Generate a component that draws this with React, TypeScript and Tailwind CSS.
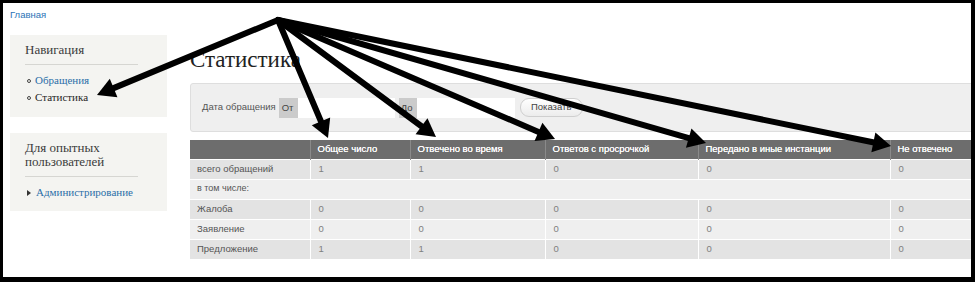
import React from 'react';

const serif = { fontFamily: '"Liberation Serif", "DejaVu Serif", serif' };

const columns = ['Общее число', 'Отвечено во время', 'Ответов с просрочкой', 'Передано в иные инстанции', 'Не отвечено'];
const widths = ['w-[120px]', 'w-[100px]', 'w-[135px]', 'w-[153px]', 'w-[192px]', 'w-[120px]'];

const rows: { label: string; values?: string[] }[] = [
  { label: 'всего обращений', values: ['1', '1', '0', '0', '0'] },
  { label: 'в том числе:' },
  { label: 'Жалоба', values: ['0', '0', '0', '0', '0'] },
  { label: 'Заявление', values: ['0', '0', '0', '0', '0'] },
  { label: 'Предложение', values: ['1', '1', '0', '0', '0'] },
];

// hand drawn annotation arrows, all from one point
const origin = { x: 278, y: 20 };
const tips = [
  { x: 97, y: 95 },
  { x: 328, y: 138 },
  { x: 436, y: 137 },
  { x: 555, y: 139 },
  { x: 706, y: 143 },
  { x: 891, y: 146 },
];

function Arrow({ tip }: { tip: { x: number; y: number } }) {
  const dx = tip.x - origin.x;
  const dy = tip.y - origin.y;
  const len = Math.sqrt(dx * dx + dy * dy);
  const ux = dx / len;
  const uy = dy / len;
  const head = 18;
  const half = 10;
  const bx = tip.x - ux * head;
  const by = tip.y - uy * head;
  const p1 = `${bx - uy * half},${by + ux * half}`;
  const p2 = `${bx + uy * half},${by - ux * half}`;
  return (
    <g>
      <line x1={origin.x} y1={origin.y} x2={bx + ux * 2} y2={by + uy * 2} stroke="black" strokeWidth={6} strokeLinecap="round" />
      <polygon points={`${tip.x},${tip.y} ${p1} ${p2}`} fill="black" />
    </g>
  );
}

function SideBlock({ title, children, className = 'pb-[11px]' }: { title: React.ReactNode; children: React.ReactNode; className?: string }) {
  return (
    <div className={`bg-[#f4f4f1] px-[15px] pt-[6px] ${className}`}>
      <h2 className="text-[13px] leading-[14px] text-[#3b3b3b] pt-[2px] pb-[7px] border-b border-[#d6d6d2] mr-[14px]" style={serif}>
        {title}
      </h2>
      {children}
    </div>
  );
}

export default function App() {
  return (
    <div className="relative w-[975px] h-[282px] bg-black pt-[3px] pl-[3px] pr-[4px] pb-[5px]" style={{ fontFamily: '"Liberation Sans", Arial, sans-serif' }}>
      <div className="w-full h-full bg-white overflow-hidden">
        <div className="pl-[7px] pt-[5px] h-[32px]">
          <a className="block text-[9.5px] leading-[14px] text-[#2b73b6]">Главная</a>
        </div>

        <div className="flex pl-[7px]">
          <aside className="w-[157px] shrink-0 flex flex-col gap-[16px]">
            <SideBlock title="Навигация">
              <ul className="mt-[7px] text-[11px] leading-[17px] pl-[2px]" style={serif}>
                <li className="flex items-center gap-[4px] text-[#2b6ea8]">
                  <span className="w-[4px] h-[4px] rounded-full border border-[#444]" />
                  Обращения
                </li>
                <li className="flex items-center gap-[4px] text-[#1e1e1e]">
                  <span className="w-[4px] h-[4px] rounded-full border border-[#444]" />
                  Статистика
                </li>
              </ul>
            </SideBlock>
            <SideBlock title={<>Для опытных<br />пользователей</>} className="pb-[10px]">
              <ul className="mt-[7px] text-[11px] leading-[17px] pl-[2px]" style={serif}>
                <li className="flex items-center gap-[5px] text-[#2b6ea8]">
                  <span className="w-0 h-0 border-y-[3px] border-y-transparent border-l-[4px] border-l-[#333]" />
                  Администрирование
                </li>
              </ul>
            </SideBlock>
          </aside>

          <main className="ml-[23px] w-[900px] shrink-0">
            <h1 className="text-[23px] leading-[28px] text-[#222] mt-[11px]" style={serif}>
              Статистика
            </h1>

            <div className="mt-[9px] h-[49px] bg-[#efefef] border border-[#dedede] rounded-[3px] flex items-center pl-[11px] text-[9.5px] text-[#555]">
              <span className="mr-[3px]">Дата обращения</span>
              <span className="h-[20px] w-[19px] bg-[#cbcbcb] pl-[3px] pt-[3px] text-[#444]">От</span>
              <span className="h-[20px] w-[97px] bg-white" />
              <span className="ml-[4px] h-[20px] w-[18px] bg-[#cbcbcb] pl-[2px] pt-[3px] text-[#444]">До</span>
              <span className="h-[20px] w-[98px] bg-white" />
              <button className="ml-[5px] h-[19px] w-[63px] rounded-[9px] border border-[#cfcfcf] bg-gradient-to-b from-white to-[#ececec] text-[#444] text-[9.5px]">
                Показать
              </button>
            </div>

            <table className="mt-[8px] border-collapse text-[9.5px] table-fixed">
              <thead>
                <tr className="bg-[#6d6d6d] text-white h-[19px]">
                  <th className={`${widths[0]} border-r border-[#8a8a8a]`} />
                  {columns.map((c, i) => (
                    <th key={c} className={`${widths[i + 1]} text-left font-normal pl-[7px] border-r border-[#8a8a8a] [text-shadow:0_0_0.4px_white]`}>
                      {c}
                    </th>
                  ))}
                </tr>
              </thead>
              <tbody>
                {rows.map((r, ri) => (
                  <tr key={r.label} className={`h-[20px] border-t border-white ${ri % 2 === 0 ? 'bg-[#e3e3e3]' : 'bg-[#efefef]'}`}>
                    {r.values ? (
                      <>
                        <td className="pl-[7px] text-[#555] border-r border-white">{r.label}</td>
                        {r.values.map((v, vi) => (
                          <td key={vi} className="pl-[8px] text-[#808080] border-r border-white">{v}</td>
                        ))}
                      </>
                    ) : (
                      <td colSpan={6} className="pl-[7px] text-[#555] text-[9px]">{r.label}</td>
                    )}
                  </tr>
                ))}
              </tbody>
            </table>
          </main>
        </div>
      </div>

      <svg className="absolute inset-0 pointer-events-none" width={975} height={282}>
        {tips.map((t, i) => (
          <Arrow key={i} tip={t} />
        ))}
      </svg>
    </div>
  );
}
